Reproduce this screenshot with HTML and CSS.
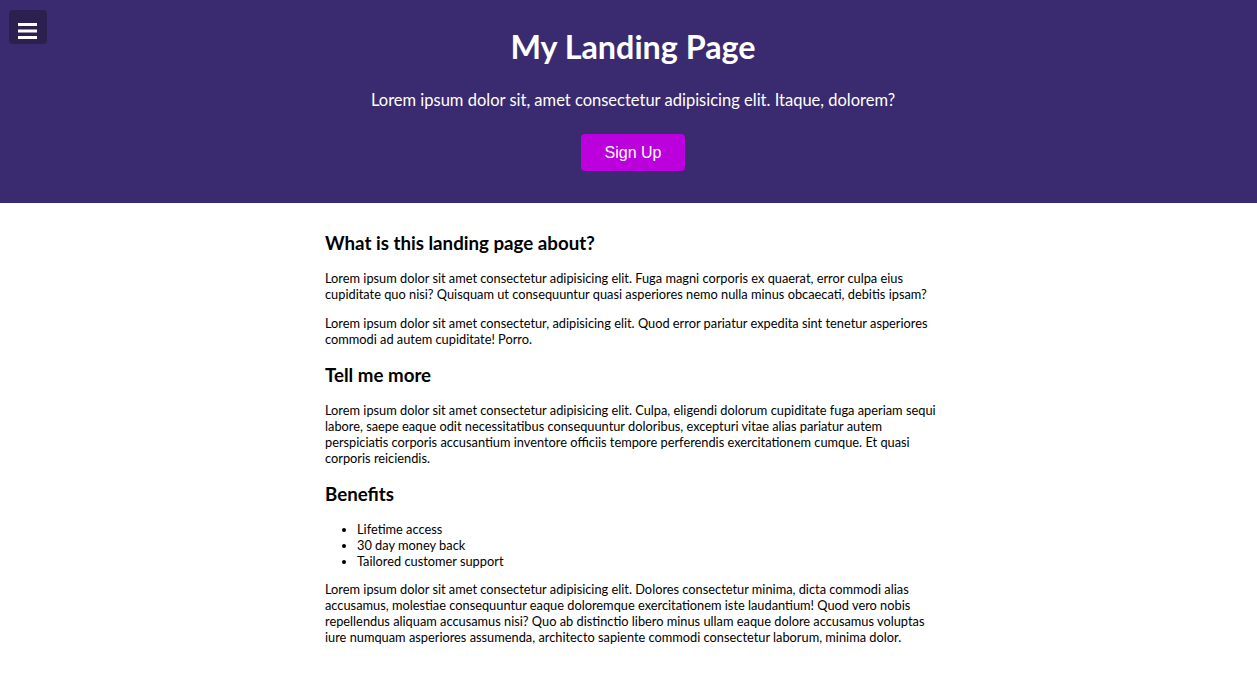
FILE: index.html
```html
<!DOCTYPE html>
<html>
<head>
<meta charset="utf-8">
<title>My Landing Page</title>
<link rel="stylesheet" href="styles.css">
</head>
<body>
<header class="hero">
  <button class="menu-btn" aria-label="Menu">
    <svg class="menu-icon" width="19" height="16" viewBox="0 0 19 16"><rect x="0" y="0" width="19" height="3" fill="#fff"/><rect x="0" y="6.5" width="19" height="3" fill="#fff"/><rect x="0" y="13" width="19" height="3" fill="#fff"/></svg>
  </button>
  <h1 class="hero-title">My Landing Page</h1>
  <p class="hero-sub">Lorem ipsum dolor sit, amet consectetur adipisicing elit. Itaque, dolorem?</p>
  <a class="signup" href="#">Sign Up</a>
</header>
<main class="content">
  <h2>What is this landing page about?</h2>
  <p>Lorem ipsum dolor sit amet consectetur adipisicing elit. Fuga magni corporis ex quaerat, error culpa eius cupiditate quo nisi? Quisquam ut consequuntur quasi asperiores nemo nulla minus obcaecati, debitis ipsam?</p>
  <p>Lorem ipsum dolor sit amet consectetur, adipisicing elit. Quod error pariatur expedita sint tenetur asperiores commodi ad autem cupiditate! Porro.</p>
  <h2>Tell me more</h2>
  <p>Lorem ipsum dolor sit amet consectetur adipisicing elit. Culpa, eligendi dolorum cupiditate fuga aperiam sequi labore, saepe eaque odit necessitatibus consequuntur doloribus, excepturi vitae alias pariatur autem perspiciatis corporis accusantium inventore officiis tempore perferendis exercitationem cumque. Et quasi corporis reiciendis.</p>
  <h2>Benefits</h2>
  <ul>
    <li>Lifetime access</li>
    <li>30 day money back</li>
    <li>Tailored customer support</li>
  </ul>
  <p>Lorem ipsum dolor sit amet consectetur adipisicing elit. Dolores consectetur minima, dicta commodi alias accusamus, molestiae consequuntur eaque doloremque exercitationem iste laudantium! Quod vero nobis repellendus aliquam accusamus nisi? Quo ab distinctio libero minus ullam eaque dolore accusamus voluptas iure numquam asperiores assumenda, architecto sapiente commodi consectetur laborum, minima dolor.</p>
</main>
</body>
</html>
```

FILE: styles.css
```css
* { box-sizing: border-box; }
body {
  margin: 0;
  font-family: Lato, "Noto Sans", sans-serif;
  color: #000;
  background: #fff;
}
.hero {
  position: relative;
  background: #3a2a6f;
  color: #fff;
  text-align: center;
  height: 203px;
  padding: 28px 0 0 9px;
}
.menu-btn {
  position: absolute;
  left: 9px;
  top: 10px;
  width: 38px;
  height: 34px;
  border: 0;
  border-radius: 4px;
  background: #2b2050;
  padding: 8px 0 0 9px;
  text-align: left;
  cursor: pointer;
}
.menu-icon { display: block; }
.hero-title {
  margin: 0;
  font-size: 32.3px;
  font-weight: 700;
  line-height: 38px;
}
.hero-sub {
  margin: 24px 0 0;
  font-size: 16.5px;
  line-height: 20px;
}
.signup {
  display: inline-block;
  margin-top: 24px;
  width: 104px;
  height: 37px;
  line-height: 37px;
  background: #bb00dd;
  color: #fff;
  border-radius: 4px;
  text-decoration: none;
  font-family: "Liberation Sans", Arial, sans-serif;
  font-size: 16px;
}
.content {
  max-width: 627px;
  margin: 0 auto;
  padding: 29px 0 20px 10px;
  font-size: 12.8px;
  line-height: 16px;
}
.content h2 {
  font-size: 18.72px;
  line-height: 22px;
  font-weight: 700;
  margin: 17px 0 16px;
}
.content h2:first-child { margin-top: 0; }
.content p {
  margin: 0 0 13px;
}
.content ul {
  margin: 0 0 12px;
  padding-left: 32px;
}
```
